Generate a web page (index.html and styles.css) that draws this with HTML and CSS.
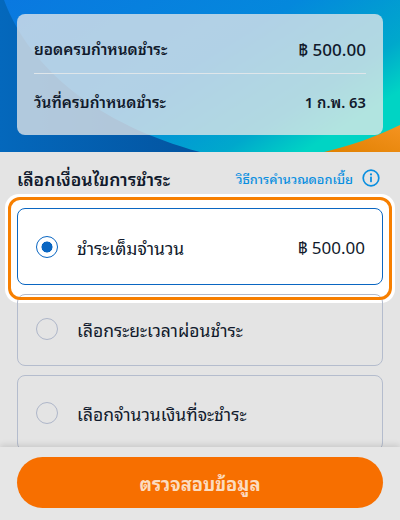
FILE: index.html
```html
<!DOCTYPE html>
<html lang="th">
<head>
<meta charset="utf-8">
<title>เลือกเงื่อนไขการชำระ</title>
<link rel="stylesheet" href="styles.css">
</head>
<body>
<div class="page">
  <header class="hero">
    <svg class="hero-art" viewBox="0 0 400 152" preserveAspectRatio="none" aria-hidden="true">
      <defs>
        <linearGradient id="sky" x1="0" y1="0" x2="1" y2="0.6">
          <stop offset="0" stop-color="#0a78e0"/>
          <stop offset="0.55" stop-color="#0488dc"/>
          <stop offset="0.85" stop-color="#00a8cc"/>
          <stop offset="1" stop-color="#00d4c4"/>
        </linearGradient>
        <linearGradient id="deep" x1="0" y1="0" x2="1" y2="0">
          <stop offset="0" stop-color="#0468bc"/>
          <stop offset="1" stop-color="#0354a0"/>
        </linearGradient>
        <linearGradient id="sun" x1="0" y1="1" x2="1" y2="0">
          <stop offset="0" stop-color="#e08000"/>
          <stop offset="1" stop-color="#f59320"/>
        </linearGradient>
      </defs>
      <rect width="400" height="152" fill="url(#sky)"/>
      <path d="M4 0 C30 70 100 125 200 152 L0 152 L0 0 Z" fill="url(#deep)"/>
      <path d="M324 152 C350 146 378 136 400 125 L400 152 Z" fill="url(#sun)"/>
    </svg>
    <div class="summary">
      <div class="summary-row summary-top">
        <span>ยอดครบกำหนดชำระ</span>
        <span class="amount">฿ 500.00</span>
      </div>
      <div class="summary-row summary-bottom">
        <span>วันที่ครบกำหนดชำระ</span>
        <span>1 ก.พ. 63</span>
      </div>
    </div>
  </header>
  <main class="content">
    <div class="section-head">
      <h2>เลือกเงื่อนไขการชำระ</h2>
      <a class="how-to">วิธีการคำนวณดอกเบี้ย
        <svg class="info" viewBox="0 0 18 18" aria-hidden="true">
          <circle cx="9" cy="9" r="7.8" fill="none" stroke="currentColor" stroke-width="1.7"/>
          <circle cx="9" cy="5.4" r="1.1" fill="currentColor"/>
          <rect x="8.1" y="7.6" width="1.8" height="5.6" rx="0.6" fill="currentColor"/>
        </svg>
      </a>
    </div>
    <div class="options">
      <div class="highlight">
        <div class="option selected">
          <span class="radio"></span>
          <span class="label">ชำระเต็มจำนวน</span>
          <span class="price">฿ 500.00</span>
        </div>
      </div>
      <div class="option short">
        <span class="radio"></span>
        <span class="label">เลือกระยะเวลาผ่อนชำระ</span>
      </div>
      <div class="option">
        <span class="radio"></span>
        <span class="label">เลือกจำนวนเงินที่จะชำระ</span>
      </div>
    </div>
  </main>
  <footer class="footer">
    <button class="cta">ตรวจสอบข้อมูล</button>
  </footer>
</div>
</body>
</html>
```
FILE: styles.css
```css
* { box-sizing: border-box; }
html, body { margin: 0; padding: 0; }
body {
  font-family: "Noto Sans Thai Looped", "Loma", "Noto Sans Thai", "Noto Sans", "DejaVu Sans", "Liberation Sans", sans-serif;
  color: #111a2c;
}
.page {
  width: 400px;
  height: 520px;
  overflow: hidden;
  position: relative;
  display: flex;
  flex-direction: column;
  background: #e4e4e4;
}
.hero {
  position: relative;
  height: 152px;
  padding: 14px 17px 0;
  flex: none;
}
.hero-art {
  position: absolute;
  inset: 0;
  width: 100%;
  height: 100%;
  display: block;
}
.summary {
  position: relative;
  height: 121px;
  padding: 0 17px;
  border-radius: 8px;
  background: rgba(232, 232, 232, 0.76);
  font-size: 15.4px;
  font-weight: 600;
  display: flex;
  flex-direction: column;
}
.summary-row {
  display: flex;
  justify-content: space-between;
  align-items: center;
}
.summary-top {
  height: 60px;
  padding-top: 9px;
  border-bottom: 1px solid #dfe6ea;
}
.summary-bottom {
  flex: 1;
  padding-bottom: 7px;
}
.summary-bottom span:last-child { font-size: 14.7px; }
.amount { font-size: 17px; font-weight: 500; }
.content {
  flex: 1;
  min-height: 0;
  padding: 0 17px;
}
.section-head {
  height: 56px;
  display: flex;
  justify-content: space-between;
  align-items: center;
  padding-bottom: 4px;
}
h2 {
  margin: 0;
  font-size: 17.6px;
  font-weight: 600;
}
.how-to {
  display: flex;
  align-items: center;
  gap: 9px;
  color: #0a8fe0;
  font-size: 12.8px;
  font-weight: 500;
}
.info { width: 18px; height: 18px; margin-right: 3px; }
.options {
  display: flex;
  flex-direction: column;
  gap: 9px;
}
.highlight {
  position: relative;
  flex: none;
}
.highlight::before,
.highlight::after {
  content: "";
  position: absolute;
  border-radius: 12px;
}
.highlight::before {
  inset: -14px -12px -18px;
  background: #fff;
  border-radius: 14px;
}
.highlight::after {
  inset: -11px -9px -15px;
  border: 3px solid #f77f00;
  z-index: 2;
}
.option {
  position: relative;
  height: 76px;
  flex: none;
  padding: 0 17px 0 18px;
  display: flex;
  align-items: center;
  gap: 19px;
  border: 1px solid #b4bccd;
  border-radius: 8px;
  font-size: 17.5px;
  font-weight: 400;
}
.short {
  height: 72px;
  padding-bottom: 3px;
}
.radio {
  width: 22px;
  height: 22px;
  flex: none;
  border-radius: 50%;
  border: 1.6px solid #aeb6c9;
}
.label { flex: 1; }
.selected {
  height: 77px;
  background: #fff;
  border-color: #0a66c2;
}
.selected .radio {
  border-color: #0a66c2;
  background: radial-gradient(circle, #0a66c2 0 5.2px, #fff 5.8px);
}
.price { font-size: 17px; }
.footer {
  position: absolute;
  left: 0;
  right: 0;
  bottom: 0;
  z-index: 3;
  height: 73px;
  padding: 10px 17px 0;
  background: #e6e6e6;
  box-shadow: 0 -2px 6px rgba(0, 0, 0, 0.12);
}
.cta {
  display: block;
  width: 100%;
  height: 51px;
  border: 0;
  border-radius: 26px;
  background: #f76f00;
  color: #fbdcc0;
  font: inherit;
  font-size: 18.3px;
  font-weight: 700;
}
```
